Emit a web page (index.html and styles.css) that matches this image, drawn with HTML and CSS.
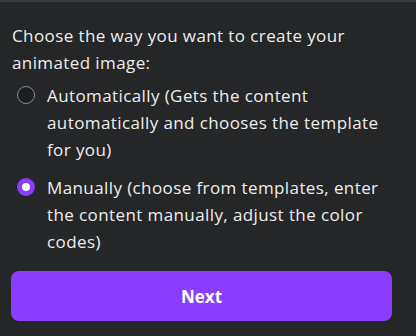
FILE: index.html
```html
<!DOCTYPE html>
<html>
<head>
<meta charset="utf-8">
<link rel="stylesheet" href="styles.css">
</head>
<body>
<div class="panel">
  <p class="prompt">Choose the way you want to create your animated image:</p>
  <div class="options">
    <label class="option">
      <span class="radio"></span>
      <span class="label">Automatically (Gets the content automatically and chooses the template for you)</span>
    </label>
    <label class="option">
      <span class="radio checked"></span>
      <span class="label">Manually (choose from templates, enter the content manually, adjust the color codes)</span>
    </label>
  </div>
  <button class="next">Next</button>
</div>
</body>
</html>
```
FILE: styles.css
```css
html, body {
  margin: 0;
  padding: 0;
  background: #252627;
}
body {
  width: 416px;
  height: 336px;
  overflow: hidden;
  border-top: 2px solid #3a3b3d;
  box-sizing: border-box;
  font-family: "Open Sans", "Noto Sans", sans-serif;
  color: #eeeeee;
}
.panel {
  padding: 20px 24px 0 12px;
}
.prompt {
  margin: 0;
  font-size: 17px;
  line-height: 27px;
  letter-spacing: 0.4px;
}
.options {
  display: flex;
  flex-direction: column;
  gap: 11px;
  margin-top: 6px;
}
.option {
  display: flex;
  align-items: flex-start;
  gap: 12px;
  padding-left: 5px;
}
.radio {
  flex: none;
  width: 18px;
  height: 18px;
  margin-top: 4px;
  box-sizing: border-box;
  border-radius: 50%;
  border: 1.5px solid #8a8b8d;
  background: #1c1d1e;
}
.radio.checked {
  border: 5.5px solid #8b3dff;
  background: #ffffff;
}
.label {
  font-size: 17px;
  line-height: 27px;
  letter-spacing: 0.4px;
}
.next {
  display: block;
  width: 381px;
  height: 50px;
  margin: 16px 0 0 -1px;
  border: none;
  border-radius: 8px;
  background: #8b3dff;
  color: #ffffff;
  font-family: "Open Sans", "Noto Sans", sans-serif;
  font-weight: 700;
  font-size: 17px;
}
```
